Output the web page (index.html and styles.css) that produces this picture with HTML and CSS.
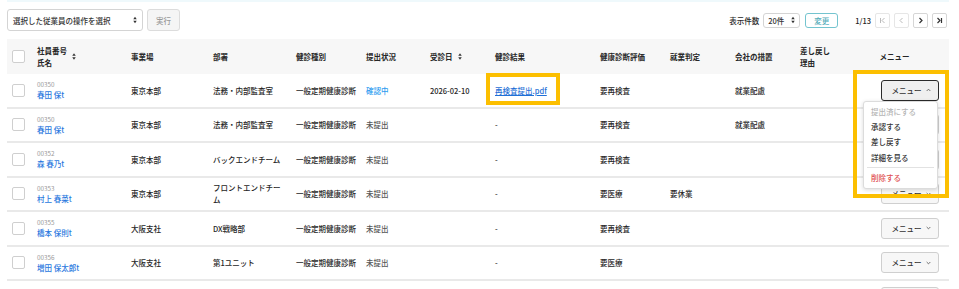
FILE: index.html
```html
<!DOCTYPE html>
<html lang="ja">
<head>
<meta charset="utf-8">
<title>健診一覧</title>
<link rel="stylesheet" href="styles.css">
</head>
<body>
<div class="page">
  <div class="topband"></div>
  <div class="toolbar">
    <div class="bulk">
      <div class="fake-select wide">
        <span>選択した従業員の操作を選択</span>
        <svg class="updown" viewBox="0 0 5 10" width="4" height="8"><polygon points="0.3,4.2 2.5,1 4.7,4.2"/><polygon points="0.3,5.8 2.5,9 4.7,5.8"/></svg>
      </div>
      <button class="btn-plain">実行</button>
    </div>
    <div class="pager">
      <span class="pager-label">表示件数</span>
      <div class="fake-select small">
        <span>20件</span>
        <svg class="updown" viewBox="0 0 5 10" width="4" height="8"><polygon points="0.3,4.2 2.5,1 4.7,4.2"/><polygon points="0.3,5.8 2.5,9 4.7,5.8"/></svg>
      </div>
      <button class="btn-teal">変更</button>
      <span class="page-count">1/13</span>
      <div class="page-btns">
        <span class="pbtn disabled"><svg viewBox="0 0 7 7" width="7" height="7"><line x1="1.5" y1="1" x2="1.5" y2="6"/><polyline points="5.5,1 3,3.5 5.5,6"/></svg></span>
        <span class="pbtn disabled"><svg viewBox="0 0 7 7" width="7" height="7"><polyline points="4.5,1 2,3.5 4.5,6"/></svg></span>
        <span class="pbtn"><svg viewBox="0 0 7 7" width="7" height="7"><polyline points="2.5,1 5,3.5 2.5,6"/></svg></span>
        <span class="pbtn"><svg viewBox="0 0 7 7" width="7" height="7"><polyline points="1.5,1 4,3.5 1.5,6"/><line x1="5.5" y1="1" x2="5.5" y2="6"/></svg></span>
      </div>
    </div>
  </div>

  <table class="grid">
    <colgroup>
      <col class="w-chk"><col class="w-name"><col class="w-site"><col class="w-dept"><col class="w-type"><col class="w-status"><col class="w-date"><col class="w-result"><col class="w-eval"><col class="w-work"><col class="w-measure"><col class="w-reason"><col class="w-menu">
    </colgroup>
    <thead>
      <tr>
        <th><span class="chk"></span></th>
        <th><span class="sortable"><span>社員番号<br>氏名</span><svg class="sort" viewBox="0 0 5 10" width="4" height="9"><polygon points="0.3,4.2 2.5,1 4.7,4.2"/><polygon points="0.3,5.8 2.5,9 4.7,5.8"/></svg></span></th>
        <th>事業場</th>
        <th>部署</th>
        <th>健診種別</th>
        <th>提出状況</th>
        <th><span class="sortable"><span>受診日</span><svg class="sort" viewBox="0 0 5 10" width="4" height="9"><polygon points="0.3,4.2 2.5,1 4.7,4.2"/><polygon points="0.3,5.8 2.5,9 4.7,5.8"/></svg></span></th>
        <th>健診結果</th>
        <th>健康診断評価</th>
        <th>就業判定</th>
        <th>会社の措置</th>
        <th>差し戻し<br>理由</th>
        <th class="th-menu">メニュー</th>
      </tr>
    </thead>
    <tbody>
      <tr>
        <td><span class="chk"></span></td>
        <td><div class="empno">00350</div><a class="name">春田 保t</a></td>
        <td>東京本部</td>
        <td class="dept">法務・内部監査室</td>
        <td>一般定期健康診断</td>
        <td class="st-check">確認中</td>
        <td>2026-02-10</td>
        <td><a class="file">再検査提出.pdf</a></td>
        <td>要再検査</td>
        <td></td>
        <td>就業配慮</td>
        <td></td>
        <td class="td-menu">
          <div class="menu-wrap">
            <button class="menu-btn active">メニュー<svg viewBox="0 0 6 4" width="5" height="4"><polyline points="0.8,3.2 3,1 5.2,3.2"/></svg></button>
            <div class="dropdown">
              <div class="dd-item disabled">提出済にする</div>
              <div class="dd-item">承認する</div>
              <div class="dd-item">差し戻す</div>
              <div class="dd-item">詳細を見る</div>
              <div class="dd-sep"></div>
              <div class="dd-item danger">削除する</div>
            </div>
          </div>
        </td>
      </tr>
      <tr>
        <td><span class="chk"></span></td>
        <td><div class="empno">00350</div><a class="name">春田 保t</a></td>
        <td>東京本部</td>
        <td class="dept">法務・内部監査室</td>
        <td>一般定期健康診断</td>
        <td class="st-none">未提出</td>
        <td></td>
        <td>-</td>
        <td>要再検査</td>
        <td></td>
        <td>就業配慮</td>
        <td></td>
        <td class="td-menu"><button class="menu-btn">メニュー<svg viewBox="0 0 6 4" width="5" height="4"><polyline points="0.8,0.8 3,3 5.2,0.8"/></svg></button></td>
      </tr>
      <tr>
        <td><span class="chk"></span></td>
        <td><div class="empno">00352</div><a class="name">森 春乃t</a></td>
        <td>東京本部</td>
        <td class="dept">バックエンドチーム</td>
        <td>一般定期健康診断</td>
        <td class="st-none">未提出</td>
        <td></td>
        <td>-</td>
        <td>要再検査</td>
        <td></td>
        <td></td>
        <td></td>
        <td class="td-menu"><button class="menu-btn">メニュー<svg viewBox="0 0 6 4" width="5" height="4"><polyline points="0.8,0.8 3,3 5.2,0.8"/></svg></button></td>
      </tr>
      <tr>
        <td><span class="chk"></span></td>
        <td><div class="empno">00353</div><a class="name">村上 春菜t</a></td>
        <td>東京本部</td>
        <td class="dept">フロントエンドチーム</td>
        <td>一般定期健康診断</td>
        <td class="st-none">未提出</td>
        <td></td>
        <td>-</td>
        <td>要医療</td>
        <td>要休業</td>
        <td></td>
        <td></td>
        <td class="td-menu"><button class="menu-btn">メニュー<svg viewBox="0 0 6 4" width="5" height="4"><polyline points="0.8,0.8 3,3 5.2,0.8"/></svg></button></td>
      </tr>
      <tr>
        <td><span class="chk"></span></td>
        <td><div class="empno">00355</div><a class="name">橋本 保則t</a></td>
        <td>大阪支社</td>
        <td class="dept">DX戦略部</td>
        <td>一般定期健康診断</td>
        <td class="st-none">未提出</td>
        <td></td>
        <td>-</td>
        <td>要再検査</td>
        <td></td>
        <td></td>
        <td></td>
        <td class="td-menu"><button class="menu-btn">メニュー<svg viewBox="0 0 6 4" width="5" height="4"><polyline points="0.8,0.8 3,3 5.2,0.8"/></svg></button></td>
      </tr>
      <tr>
        <td><span class="chk"></span></td>
        <td><div class="empno">00356</div><a class="name">増田 保太郎t</a></td>
        <td>大阪支社</td>
        <td class="dept">第1ユニット</td>
        <td>一般定期健康診断</td>
        <td class="st-none">未提出</td>
        <td></td>
        <td>-</td>
        <td>要医療</td>
        <td></td>
        <td></td>
        <td></td>
        <td class="td-menu"><button class="menu-btn">メニュー<svg viewBox="0 0 6 4" width="5" height="4"><polyline points="0.8,0.8 3,3 5.2,0.8"/></svg></button></td>
      </tr>
      <tr>
        <td><span class="chk"></span></td>
        <td></td>
        <td></td>
        <td></td>
        <td></td>
        <td></td>
        <td></td>
        <td></td>
        <td></td>
        <td></td>
        <td></td>
        <td></td>
        <td class="td-menu"><button class="menu-btn">メニュー<svg viewBox="0 0 6 4" width="5" height="4"><polyline points="0.8,0.8 3,3 5.2,0.8"/></svg></button></td>
      </tr>
    </tbody>
  </table>

  <div class="hl hl-file"></div>
  <div class="hl hl-menu"></div>
</div>
</body>
</html>
```

FILE: styles.css
```css
* { box-sizing: border-box; }
html, body { margin: 0; padding: 0; background: #fff; }
body {
  font-family: "Noto Sans CJK JP", "Noto Sans", sans-serif;
  font-size: 7.5px;
  font-weight: 500;
  color: #262626;
  overflow: hidden;
}
.page {
  position: relative;
  padding: 0 10px 0 7px;
}
.topband {
  height: 2px;
  background: #eff9fc;
}
.toolbar {
  margin-top: 7px;
  height: 22px;
  display: flex;
  align-items: center;
  justify-content: space-between;
}
.bulk { display: flex; align-items: stretch; gap: 4px; height: 22px; }
.fake-select {
  display: flex;
  align-items: center;
  justify-content: space-between;
  border: 1px solid #d4d4d4;
  border-radius: 3px;
  background: #fff;
  color: #333;
}
.fake-select.wide { width: 136px; padding: 0 5px 0 5px; }
.fake-select.small { width: 37px; height: 15px; padding: 0 4px 0 4px; }
.updown { fill: #333; }
.btn-plain {
  width: 33px;
  border: 1px solid #dcdcdc;
  border-radius: 3px;
  background: #f5f5f5;
  color: #999;
  font: inherit;
  padding: 0;
}
.pager { display: flex; align-items: center; margin-right: 2px; }
.pager-label { margin-right: 4px; }
.btn-teal {
  margin-left: 5px;
  width: 33px;
  height: 15px;
  border: 1px solid #74c4cf;
  border-radius: 3px;
  background: #fff;
  color: #56adba;
  font: inherit;
  padding: 0;
}
.page-count { margin-left: 17px; }
.page-btns { display: flex; gap: 4px; margin-left: 4px; }
.pbtn {
  width: 15px;
  height: 15px;
  border: 1px solid #d6d6d6;
  border-radius: 2px;
  display: flex;
  align-items: center;
  justify-content: center;
  background: #fff;
}
.pbtn svg { fill: none; stroke: #333; stroke-width: 1.2; }
.pbtn.disabled { border-color: #e6e6e6; }
.pbtn.disabled svg { stroke: #bbb; stroke-width: 1; }

.grid {
  margin-top: 8px;
  width: 942px;
  table-layout: fixed;
  border-collapse: separate;
  border-spacing: 0;
}
.w-chk { width: 25px; }
.w-name { width: 94px; }
.w-site { width: 82px; }
.w-dept { width: 83px; }
.w-type { width: 70px; }
.w-status { width: 64px; }
.w-date { width: 65px; }
.w-result { width: 105px; }
.w-eval { width: 70px; }
.w-work { width: 65px; }
.w-measure { width: 65px; }
.w-reason { width: 45px; }
.w-menu { width: 109px; }

th {
  background: #f7f7f7;
  height: 35px;
  padding: 0 0 0 5px;
  text-align: left;
  font-weight: bold;
  line-height: 12px;
  vertical-align: middle;
}
th.th-menu { text-align: center; padding: 0; }
td {
  height: 34.5px;
  padding: 0 0 0 5px;
  border-bottom: 2px solid #e9e9e9;
  line-height: 11.5px;
  vertical-align: middle;
  white-space: normal;
}
td.dept { padding-right: 8px; }
.chk {
  display: block;
  width: 13px;
  height: 13px;
  border: 1px solid #cfcfcf;
  border-radius: 2px;
  background: #fff;
}
.sortable { display: inline-flex; align-items: center; gap: 5px; }
.sort { fill: #333; }
.empno { font-size: 6.3px; color: #9a9a9a; line-height: 9px; font-weight: 400; }
.name { color: #2a78de; line-height: 11px; display: block; }
.st-check { color: #2d9cf0; }
.st-none { color: #555; }
.file { color: #1f6fd6; text-decoration: underline; }
.td-menu { text-align: right; padding: 0 10px 0 0; }
.menu-wrap { position: relative; display: inline-block; vertical-align: middle; }
.menu-btn {
  width: 58px;
  height: 21px;
  display: inline-flex;
  align-items: center;
  justify-content: center;
  gap: 4px;
  border: 1px solid #cfcfcf;
  border-radius: 3px;
  background: #f7f7f7;
  color: #333;
  font: inherit;
  padding: 0 0 0 2px;
  vertical-align: middle;
}
.menu-btn svg { fill: none; stroke: #555; stroke-width: 1; }
.menu-btn.active { border: 1.5px solid #2a2a2a; background: #efefef; }
.dropdown {
  position: absolute;
  top: 100%;
  right: 1px;
  width: 75px;
  background: #fff;
  border: 1px solid #dcdcdc;
  border-radius: 3px;
  box-shadow: 0 1px 4px rgba(0,0,0,0.15);
  padding: 2px 0 3px;
  text-align: left;
  z-index: 5;
}
.dd-item { height: 15.3px; line-height: 15.3px; padding-left: 7px; color: #333; }
.dd-item.disabled { color: #b5b5b5; }
.dd-item.danger { color: #e05050; }
.dd-sep { height: 1px; background: #e2e2e2; margin: 2px 3px 2px 3px; }

.hl {
  position: absolute;
  border: 4px solid #fcbf00;
  z-index: 10;
  pointer-events: none;
}
.hl-file { left: 486px; top: 73px; width: 74px; height: 32px; }
.hl-menu { left: 853px; top: 70px; width: 96px; height: 128px; }
```
